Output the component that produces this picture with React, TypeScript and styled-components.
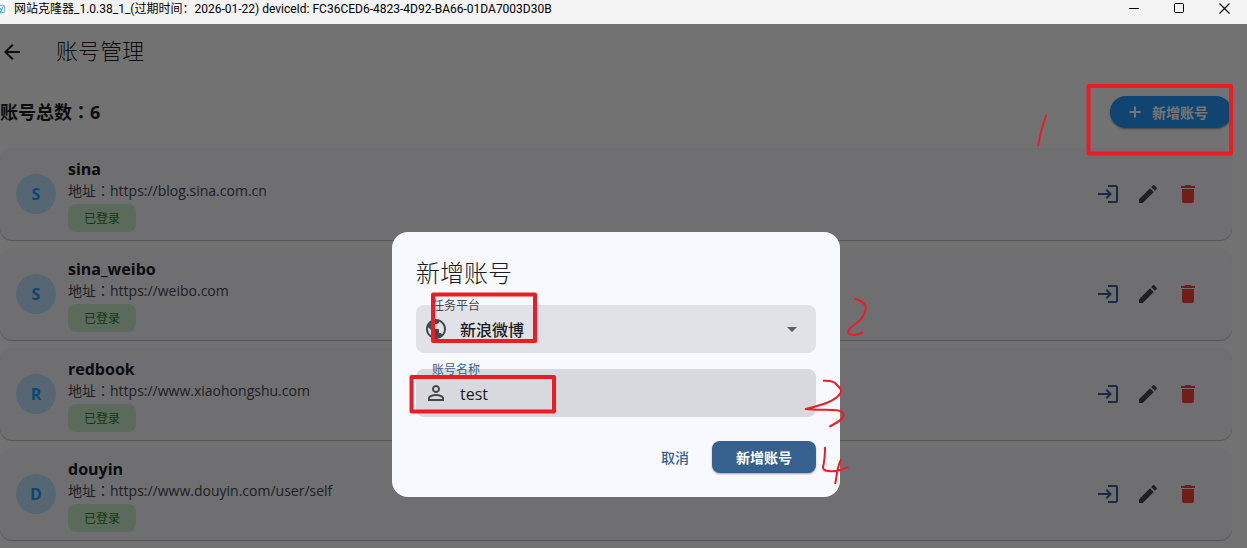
import React, { useState } from "react";
import styled, { createGlobalStyle } from "styled-components";
import {
  MdArrowBack,
  MdArrowDropDown,
  MdDelete,
  MdEdit,
  MdLogin,
  MdPersonOutline,
  MdPublic,
} from "react-icons/md";

const Global = createGlobalStyle`
  *, *::before, *::after { box-sizing: border-box; }
  body {
    margin: 0;
    font-family: "Open Sans", "Noto Sans CJK SC", sans-serif;
    color: #191c20;
  }
  button, input, select { font-family: inherit; }
`;

const Window = styled.div`
  display: flex;
  flex-direction: column;
  height: 100vh;
  overflow: hidden;
`;

const TitleBar = styled.header`
  display: flex;
  align-items: center;
  flex: none;
  height: 24px;
  background: #f3f3f3;
  color: #000;
`;

const TitleText = styled.span`
  flex: 1;
  margin: 0 0 6px 6px;
  font-family: Roboto, "Noto Sans CJK SC", sans-serif;
  font-size: 12px;
  line-height: 18px;
  white-space: nowrap;
`;

const AppIcon = styled.svg`
  flex: none;
  margin-bottom: 8px;
`;

const WindowButton = styled.button`
  display: flex;
  justify-content: center;
  width: 45px;
  height: 24px;
  padding: 3px 0 0;
  border: 0;
  background: none;
  color: #000;
`;

const Screen = styled.div`
  position: relative;
  flex: 1;
  overflow: hidden;
  background: #f9f9fb;
`;

const Scrim = styled.div`
  position: absolute;
  inset: 0;
  display: flex;
  align-items: flex-start;
  justify-content: center;
  padding: 208px 15px 0 0;
  background: rgba(0, 0, 0, 0.54);
`;

const AppBar = styled.div`
  display: flex;
  align-items: center;
  gap: 32px;
  height: 56px;
`;

const AppBarTitle = styled.h1`
  margin: 0;
  padding-bottom: 4px;
  font-size: 22px;
  font-weight: 300;
  line-height: 28px;
`;

const IconButton = styled.button<{ $size: number; $color: string }>`
  display: flex;
  align-items: center;
  justify-content: center;
  width: ${(p) => p.$size}px;
  height: ${(p) => p.$size}px;
  padding: 0;
  border: 0;
  background: none;
  color: ${(p) => p.$color};
`;

const Content = styled.main`
  padding: 16px 15px 0 0;
`;

const Summary = styled.div`
  display: flex;
  align-items: center;
  justify-content: space-between;
  height: 32px;
  margin-bottom: 20px;
`;

const Count = styled.h2`
  margin: 0;
  font-size: 18px;
  font-weight: 700;
  line-height: 28px;
`;

const Colon = styled.span`
  font-family: "Noto Sans CJK TC", sans-serif;
  line-height: 1;
`;

const AddButton = styled.button`
  display: flex;
  align-items: center;
  gap: 8px;
  height: 32px;
  padding: 0 24px 0 16px;
  border: 0;
  border-radius: 16px;
  background: #2196f3;
  color: #fff;
  font-size: 14px;
  font-weight: 700;
  box-shadow: 0 1px 2px rgba(0, 0, 0, 0.4);
`;

const List = styled.ul`
  display: flex;
  flex-direction: column;
  gap: 8px;
  margin: 0;
  padding: 0;
  list-style: none;
`;

const Card = styled.li`
  display: flex;
  align-items: center;
  padding: 0 24px 0 16px;
  border-radius: 12px;
  background: #f2f0f7;
  box-shadow: 0 1px 1px rgba(0, 0, 0, 0.25);
`;

const Avatar = styled.span`
  display: flex;
  align-items: center;
  justify-content: center;
  flex: none;
  width: 40px;
  height: 40px;
  margin-right: 12px;
  border-radius: 50%;
  background: #bbdefb;
  color: #2196f3;
  font-size: 16px;
  font-weight: 700;
`;

const Details = styled.div`
  flex: 1;
  padding: 10px 0 8px;
`;

const Name = styled.div`
  font-size: 16px;
  font-weight: 700;
  line-height: 22px;
`;

const Address = styled.div`
  height: 20px;
  margin-bottom: 4px;
  color: #43474e;
  font-size: 14px;
  line-height: 22px;
`;

const Status = styled.span`
  display: flex;
  align-items: center;
  justify-content: center;
  width: 68px;
  height: 28px;
  border-radius: 8px;
  background: #c8e6c9;
  color: #2e7d32;
  font-size: 12px;
`;

const Dialog = styled.form`
  width: 448px;
  padding: 24px;
  border-radius: 16px;
  background: #f8f9ff;
`;

const DialogTitle = styled.h2`
  margin: 0 0 16px;
  font-size: 24px;
  font-weight: 300;
  line-height: 33px;
`;

const Field = styled.div<{ $active?: boolean }>`
  position: relative;
  display: flex;
  align-items: center;
  height: 48px;
  margin-bottom: 16px;
  border-radius: 8px;
  background: ${(p) => (p.$active ? "#d8d9de" : "#e1e2e7")};
  color: #43474e;
`;

const FieldLabel = styled.label<{ $active?: boolean }>`
  position: absolute;
  top: -7px;
  left: 16px;
  color: ${(p) => (p.$active ? "#36618e" : "#43474e")};
  font-size: 12px;
  font-weight: 400;
  line-height: 16px;
`;

const Prefix = styled.span`
  display: flex;
  justify-content: center;
  flex: none;
  width: 40px;
`;

const Select = styled.select`
  flex: 1;
  min-width: 0;
  height: 48px;
  padding: 2px 4px 0;
  border: 0;
  outline: 0;
  appearance: none;
  background: none;
  color: #191c20;
  font-size: 16px;
  font-weight: 500;
`;

const Input = styled.input`
  flex: 1;
  min-width: 0;
  height: 48px;
  padding: 2px 4px 0;
  border: 0;
  outline: 0;
  background: none;
  color: #191c20;
  font-size: 16px;
`;

const Suffix = styled.span`
  display: flex;
  margin-right: 12px;
  color: #5b5d60;
  pointer-events: none;
`;

const Actions = styled.div`
  display: flex;
  justify-content: flex-end;
  gap: 8px;
  margin-top: 24px;
`;

const ActionButton = styled.button<{ $filled?: boolean }>`
  height: 32px;
  padding: 0 ${(p) => (p.$filled ? 24 : 15)}px;
  border: 0;
  border-radius: 8px;
  background: ${(p) => (p.$filled ? "#36618e" : "none")};
  box-shadow: ${(p) => (p.$filled ? "0 1px 2px rgba(0, 0, 0, 0.35)" : "none")};
  color: ${(p) => (p.$filled ? "#fff" : "#36618e")};
  font-size: 14px;
  font-weight: ${(p) => (p.$filled ? 700 : 500)};
`;

const Markup = styled.svg`
  position: absolute;
  top: 0;
  left: 0;
  pointer-events: none;
`;

const accounts = [
  { name: "sina", url: "https://blog.sina.com.cn" },
  { name: "sina_weibo", url: "https://weibo.com" },
  { name: "redbook", url: "https://www.xiaohongshu.com" },
  { name: "douyin", url: "https://www.douyin.com/user/self" },
];

function WindowTitle() {
  return (
    <TitleBar>
      <AppIcon width="8" height="16" viewBox="0 0 8 16" aria-hidden="true">
        <rect width="8" height="16" fill="#fff" />
        <path d="M0 5.500h3q1.500 0 1.500 1.500v4q0 1.500-1.500 1.500H0" fill="none" stroke="#7fb2f7" strokeWidth="1.300" />
        <path d="M0 8l1.500 2.500L2.500 7" fill="none" stroke="#4a86e8" strokeWidth="1" />
        <circle cx="0.500" cy="12" r="1.300" fill="#35c2a0" />
      </AppIcon>
      <TitleText>网站克隆器_1.0.38_1_(过期时间：2026-01-22) deviceId: FC36CED6-4823-4D92-BA66-01DA7003D30B</TitleText>
      <WindowButton aria-label="最小化">
        <svg width="11" height="11" viewBox="0 0 11 11"><path d="M0 5.500h10" stroke="currentColor" /></svg>
      </WindowButton>
      <WindowButton aria-label="最大化">
        <svg width="11" height="11" viewBox="0 0 11 11"><rect x="0.500" y="0.500" width="9" height="9" rx="1" fill="none" stroke="currentColor" /></svg>
      </WindowButton>
      <WindowButton aria-label="关闭">
        <svg width="11" height="11" viewBox="0 0 11 11"><path d="M0.500 0.500l10 10M10.500 0.500l-10 10" stroke="currentColor" strokeWidth="1.100" /></svg>
      </WindowButton>
    </TitleBar>
  );
}

function PlusIcon() {
  return (
    <svg width="18" height="18" viewBox="0 0 18 18" fill="none" stroke="currentColor" strokeWidth="2" aria-hidden="true">
      <path d="M3.500 9h11M9 3.500v11" />
    </svg>
  );
}

function AddAccountDialog() {
  const [platform, setPlatform] = useState("weibo");
  const [name, setName] = useState("test");
  return (
    <Dialog role="dialog" aria-labelledby="dialog-title" onSubmit={(e) => e.preventDefault()}>
      <DialogTitle id="dialog-title">新增账号</DialogTitle>
      <Field>
        <FieldLabel htmlFor="platform">任务平台</FieldLabel>
        <Prefix><MdPublic size={24} /></Prefix>
        <Select id="platform" value={platform} onChange={(e) => setPlatform(e.target.value)}>
          <option value="weibo">新浪微博</option>
        </Select>
        <Suffix><MdArrowDropDown size={24} /></Suffix>
      </Field>
      <Field $active>
        <FieldLabel $active htmlFor="account">账号名称</FieldLabel>
        <Prefix><MdPersonOutline size={24} /></Prefix>
        <Input id="account" value={name} onChange={(e) => setName(e.target.value)} />
      </Field>
      <Actions>
        <ActionButton type="button">取消</ActionButton>
        <ActionButton type="submit" $filled>新增账号</ActionButton>
      </Actions>
    </Dialog>
  );
}

function PenMarks() {
  return (
    <Markup width="1247" height="548" viewBox="0 0 1247 548" fill="none" stroke="#ed1c24" strokeLinecap="round" strokeLinejoin="round" aria-hidden="true">
      <g strokeWidth="4">
        <rect x="1088.500" y="86" width="142.500" height="67.500" />
        <rect x="433" y="294.500" width="102" height="46.500" />
        <rect x="411.500" y="377" width="142.500" height="34.500" />
      </g>
      <g strokeWidth="2">
        <path d="M1046 115.500C1043 124 1040 134 1038.300 145.300" />
        <path d="M855.300 298.700C862 301 866.500 303.500 865.700 309C865 318 856 323 850 328.500C846.500 332 848 334.500 853.500 335C857 335 859 333.500 862.300 333" />
        <path d="M823.700 380.800C829 381 833 380.500 836 384C840 388 842.500 390 840.500 393C836 401 822 405 805.700 409C818 410.500 830 409 837 410.300C843 411 845 414 842.500 418C839 422 834 424 830 426.300" />
        <path d="M825 447.700C825 455 824.500 461 823 467C823 471 827 471 832 471.300C838 471.500 842 469.500 847.700 467.300M841 459.700C837 467 837 475 835.300 483.300" />
      </g>
    </Markup>
  );
}

export default function App() {
  return (
    <Window>
      <Global />
      <WindowTitle />
      <Screen>
        <AppBar>
          <IconButton $size={24} $color="#191c20" aria-label="返回"><MdArrowBack size={24} /></IconButton>
          <AppBarTitle>账号管理</AppBarTitle>
        </AppBar>
        <Content>
          <Summary>
            <Count>账号总数<Colon>：</Colon>6</Count>
            <AddButton><PlusIcon />新增账号</AddButton>
          </Summary>
          <List>
            {accounts.map((a) => (
              <Card key={a.name}>
                <Avatar>{a.name[0].toUpperCase()}</Avatar>
                <Details>
                  <Name>{a.name}</Name>
                  <Address>地址<Colon>：</Colon>{a.url}</Address>
                  <Status>已登录</Status>
                </Details>
                <IconButton $size={40} $color="#36618e" aria-label="登录"><MdLogin size={24} /></IconButton>
                <IconButton $size={40} $color="#43474e" aria-label="编辑"><MdEdit size={24} /></IconButton>
                <IconButton $size={40} $color="#f44336" aria-label="删除"><MdDelete size={24} /></IconButton>
              </Card>
            ))}
          </List>
        </Content>
        <Scrim>
          <AddAccountDialog />
        </Scrim>
      </Screen>
      <PenMarks />
    </Window>
  );
}
